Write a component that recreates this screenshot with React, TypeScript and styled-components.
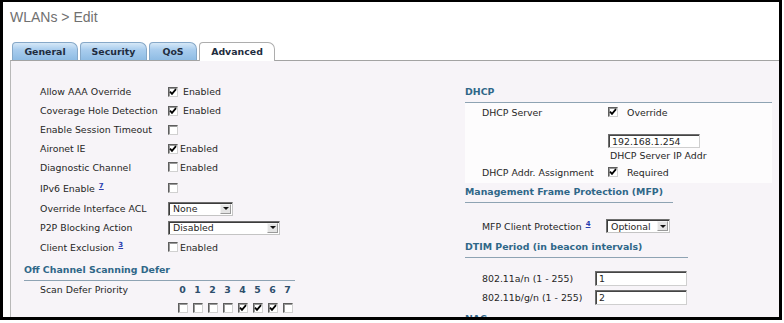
import styled, { createGlobalStyle } from "styled-components";

const GlobalStyle = createGlobalStyle`
  html, body {
    margin: 0;
    padding: 0;
    background: #fff;
  }
  body {
    font-family: "DejaVu Sans", Verdana, sans-serif;
    font-size: 9.4px;
    color: #262626;
  }
`;

const Frame = styled.div`
  width: 782px;
  height: 320px;
  box-sizing: border-box;
  border: 3px solid #000;
  border-top-width: 2px;
  background: #fff;
  display: flex;
  flex-direction: column;
  overflow: hidden;
`;

const Title = styled.div`
  height: 30px;
  padding-left: 7px;
  font: 14px/30px "Liberation Sans", Arial, sans-serif;
  color: #707070;
`;

const Tabs = styled.div`
  display: flex;
  align-items: flex-start;
  gap: 2px;
  height: 19px;
  margin: 10px 0 -1px;
  padding-left: 9px;
`;

const Tab = styled.div<{ $w: number; $active?: boolean }>`
  position: relative;
  z-index: 1;
  width: ${(p) => p.$w}px;
  height: ${(p) => (p.$active ? 19 : 18)}px;
  box-sizing: border-box;
  border: 1px solid ${(p) => (p.$active ? "#adadad" : "#86a8c8")};
  border-bottom: none;
  border-radius: 4px 7px 0 0;
  background: ${(p) =>
    p.$active ? "#fff" : "linear-gradient(#d6e8f7, #a9cdee 40%, #8fbce4)"};
  font-weight: bold;
  line-height: 17px;
  text-align: center;
  color: #1f2d40;
`;

const Panel = styled.div`
  flex: 1;
  margin-left: 7px;
  border-top: 1px solid #a3a3a3;
  border-left: 1px solid #b8b8b8;
  background: #f7f4f8;
  display: grid;
  grid-template-columns: 454px 1fr;
  align-items: start;
  overflow: hidden;
`;

const LeftCol = styled.div`
  padding: 21px 0 0 13px;
`;

const RightCol = styled.div`
  padding-top: 23px;
`;

const Row = styled.div<{ $h: number; $cols?: number; $mt?: number }>`
  display: grid;
  grid-template-columns: ${(p) => p.$cols ?? 128}px auto;
  align-items: center;
  height: ${(p) => p.$h}px;
  margin-top: ${(p) => p.$mt ?? 0}px;
  padding-left: ${(p) => (p.$cols ? 17 : 16)}px;
`;

const Label = styled.span`
  white-space: nowrap;
`;

const Control = styled.div<{ $gap?: number }>`
  display: flex;
  align-items: center;
  gap: ${(p) => p.$gap ?? 5}px;
  white-space: nowrap;
`;

const Box = styled.span`
  width: 10px;
  height: 10px;
  box-sizing: border-box;
  border: 1px solid;
  border-color: #5e5e5e #d0d0d0 #d0d0d0 #5e5e5e;
  box-shadow: inset 1px 1px 0 #999;
  background: #fff;
  display: inline-flex;
  align-items: center;
  justify-content: center;
  flex: none;
`;

const Help = styled.a`
  margin-left: 4px;
  font-size: 7px;
  font-weight: bold;
  color: #2a3fb0;
  text-decoration: underline;
  vertical-align: 4px;
`;

const Select = styled.div<{ $w: number }>`
  width: ${(p) => p.$w}px;
  height: 14px;
  box-sizing: border-box;
  border: 1px solid;
  border-color: #6e6e6e #c4c4c4 #c4c4c4 #6e6e6e;
  box-shadow: inset 1px 1px 0 #3c3c3c;
  background: #fff;
  display: flex;
  align-items: center;
  justify-content: space-between;
  padding: 0 1px 0 4px;
`;

const Arrow = styled.span`
  width: 11px;
  height: 10px;
  box-sizing: border-box;
  background: #e4e4e4;
  border: 1px solid #f4f4f4;
  border-right-color: #9a9a9a;
  border-bottom-color: #9a9a9a;
  display: flex;
  align-items: center;
  justify-content: center;

  &::after {
    content: "";
    border-left: 3px solid transparent;
    border-right: 3px solid transparent;
    border-top: 3px solid #111;
  }
`;

const Input = styled.div<{ $w: number; $h?: number; $mt?: number }>`
  width: ${(p) => p.$w}px;
  height: ${(p) => p.$h ?? 14}px;
  margin-top: ${(p) => p.$mt ?? 0}px;
  box-sizing: border-box;
  border: 1px solid;
  border-color: #6e6e6e #cfcfcf #cfcfcf #6e6e6e;
  box-shadow: inset 1px 1px 0 #454545;
  background: #fff;
  padding-left: 3px;
  display: flex;
  align-items: center;
`;

const Heading = styled.div<{ $w: number; $mt?: number }>`
  width: ${(p) => p.$w}px;
  margin-top: ${(p) => p.$mt ?? 0}px;
  line-height: 16px;
  padding-bottom: 2px;
  border-bottom: 1px solid #8ea3b3;
  font-weight: bold;
  color: #2f6788;
  white-space: nowrap;
`;

const DhcpBox = styled.div`
  width: 307px;
  background: #fdfcfd;
  padding-bottom: 2px;
`;

const Stack = styled.div`
  display: flex;
  flex-direction: column;
`;

const Caption = styled.span`
  line-height: 15px;
  margin-left: 2px;
`;

const ScanRow = styled.div`
  display: grid;
  grid-template-columns: 128px auto;
  align-items: start;
  margin-top: 2px;
  padding-left: 16px;
`;

const ScanLabel = styled.span`
  line-height: 14px;
`;

const Priorities = styled.div`
  display: grid;
  grid-template-columns: repeat(8, 15px);
  grid-template-rows: 14px 10px;
  row-gap: 6px;
  justify-items: center;
  margin-left: 7px;
`;

const Digit = styled.span`
  font-weight: bold;
  line-height: 14px;
  color: #2d4f6c;
`;

const Check = ({ on }: { on?: boolean }) => (
  <Box>
    {on && (
      <svg width="8" height="8" viewBox="0 0 8 8">
        <path d="M1 3.6 L3 5.8 L7 1.2" stroke="#000" strokeWidth="1.8" fill="none" />
      </svg>
    )}
  </Box>
);

const Dropdown = ({ w, value }: { w: number; value: string }) => (
  <Select $w={w}>
    <span>{value}</span>
    <Arrow />
  </Select>
);

const priorities = [false, false, false, false, true, true, true, false];

const App = () => {
  return (
    <>
      <GlobalStyle />
      <Frame>
        <Title>WLANs &gt; Edit</Title>
        <Tabs>
          <Tab $w={66}>General</Tab>
          <Tab $w={67}>Security</Tab>
          <Tab $w={48}>QoS</Tab>
          <Tab $w={76} $active>
            Advanced
          </Tab>
        </Tabs>
        <Panel>
          <LeftCol>
            <Row $h={19}>
              <Label>Allow AAA Override</Label>
              <Control>
                <Check on />
                Enabled
              </Control>
            </Row>
            <Row $h={19}>
              <Label>Coverage Hole Detection</Label>
              <Control>
                <Check on />
                Enabled
              </Control>
            </Row>
            <Row $h={19}>
              <Label>Enable Session Timeout</Label>
              <Control>
                <Check />
              </Control>
            </Row>
            <Row $h={19}>
              <Label>Aironet IE</Label>
              <Control $gap={2}>
                <Check on />
                Enabled
              </Control>
            </Row>
            <Row $h={18}>
              <Label>Diagnostic Channel</Label>
              <Control $gap={2}>
                <Check />
                Enabled
              </Control>
            </Row>
            <Row $h={23}>
              <Label>
                IPv6 Enable<Help>7</Help>
              </Label>
              <Control>
                <Check />
              </Control>
            </Row>
            <Row $h={19}>
              <Label>Override Interface ACL</Label>
              <Control>
                <Dropdown w={65} value="None" />
              </Control>
            </Row>
            <Row $h={19}>
              <Label>P2P Blocking Action</Label>
              <Control>
                <Dropdown w={112} value="Disabled" />
              </Control>
            </Row>
            <Row $h={20}>
              <Label>
                Client Exclusion<Help>3</Help>
              </Label>
              <Control $gap={2}>
                <Check />
                Enabled
              </Control>
            </Row>
            <Heading $w={271} $mt={5}>
              Off Channel Scanning Defer
            </Heading>
            <ScanRow>
              <ScanLabel>Scan Defer Priority</ScanLabel>
              <Priorities>
                {priorities.map((_, i) => (
                  <Digit key={"d" + i}>{i}</Digit>
                ))}
                {priorities.map((on, i) => (
                  <Check key={"c" + i} on={on} />
                ))}
              </Priorities>
            </ScanRow>
          </LeftCol>

          <RightCol>
            <Heading $w={307}>DHCP</Heading>
            <DhcpBox>
              <Row $h={18} $cols={126}>
                <Label>DHCP Server</Label>
                <Control $gap={9}>
                  <Check on />
                  Override
                </Control>
              </Row>
              <Row $h={42} $cols={126}>
                <span />
                <Stack>
                  <Input $w={92} $mt={13}>
                    192.168.1.254
                  </Input>
                  <Caption>DHCP Server IP Addr</Caption>
                </Stack>
              </Row>
              <Row $h={18} $cols={126}>
                <Label>DHCP Addr. Assignment</Label>
                <Control $gap={9}>
                  <Check on />
                  Required
                </Control>
              </Row>
            </DhcpBox>
            <Heading $w={208} $mt={1}>
              Management Frame Protection (MFP)
            </Heading>
            <Row $h={20} $cols={124} $mt={13}>
              <Label>
                MFP Client Protection<Help>4</Help>
              </Label>
              <Control>
                <Dropdown w={64} value="Optional" />
              </Control>
            </Row>
            <Heading $w={223} $mt={3}>
              DTIM Period (in beacon intervals)
            </Heading>
            <Row $h={19} $cols={113} $mt={11}>
              <Label>802.11a/n (1 - 255)</Label>
              <Input $w={92} $h={15}>
                1
              </Input>
            </Row>
            <Row $h={19} $cols={113}>
              <Label>802.11b/g/n (1 - 255)</Label>
              <Input $w={92} $h={15}>
                2
              </Input>
            </Row>
            <Heading $w={223} $mt={4}>
              NAC
            </Heading>
          </RightCol>
        </Panel>
      </Frame>
    </>
  );
};

export default App;
